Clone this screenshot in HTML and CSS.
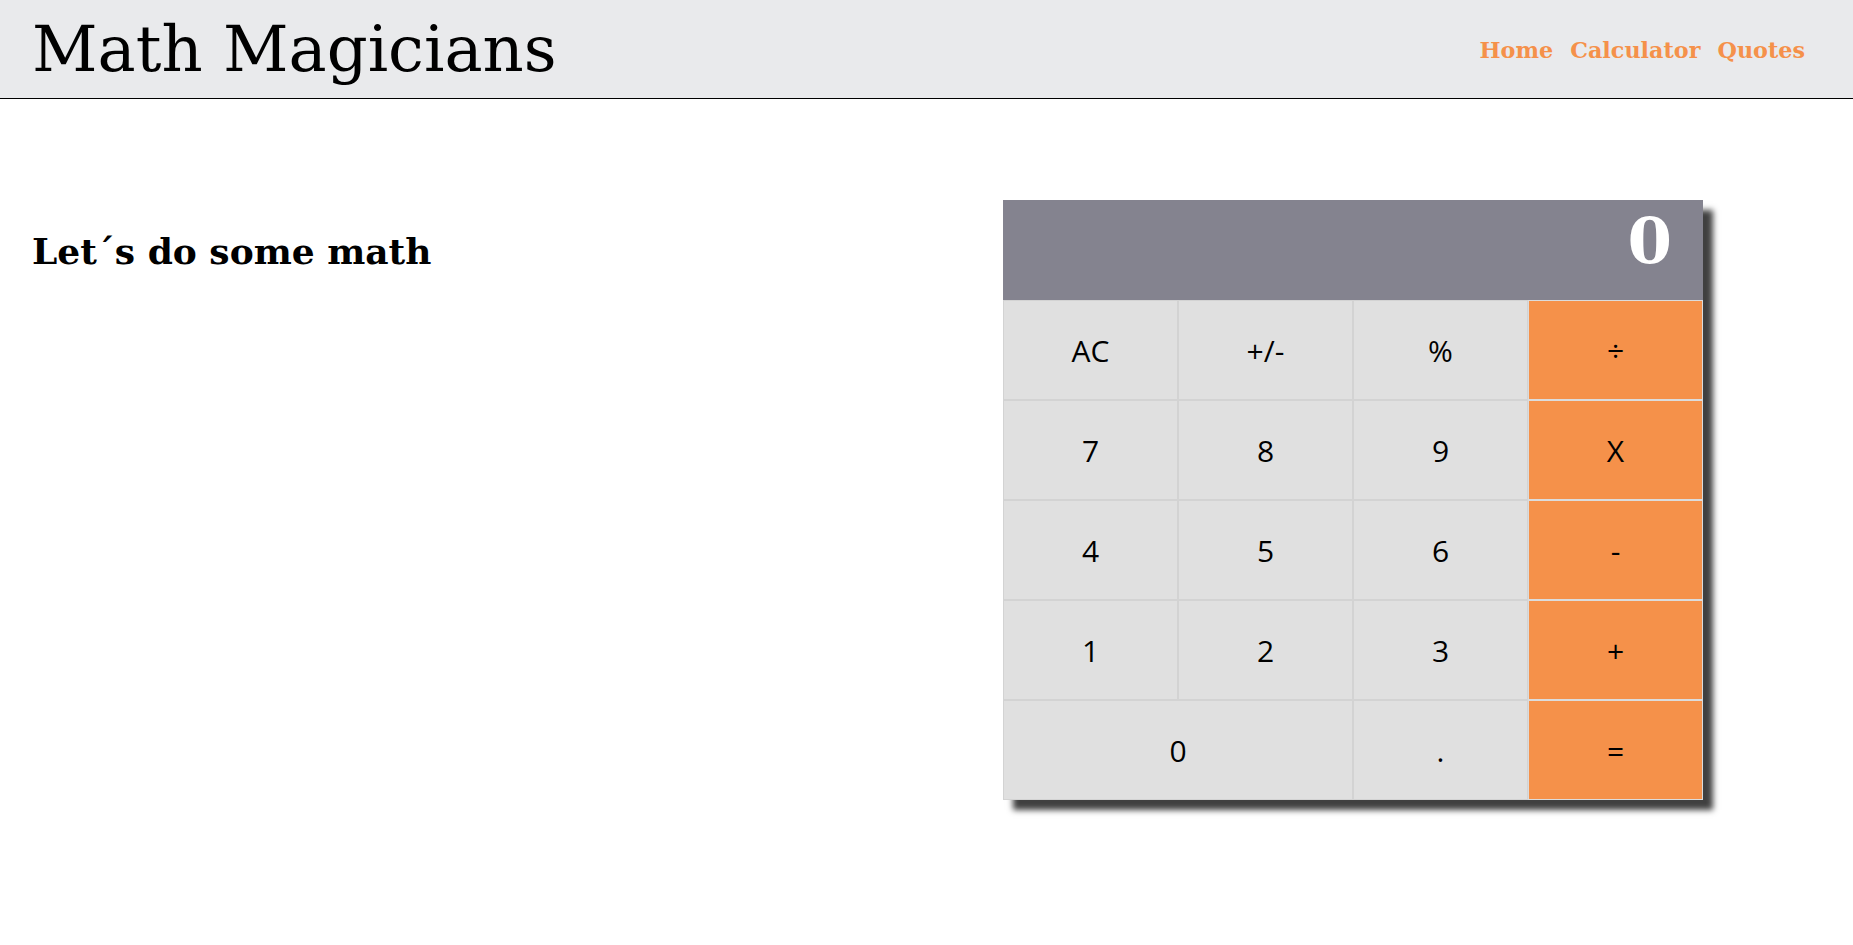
FILE: index.html
```html
<!DOCTYPE html>
<html lang="en">
<head>
<meta charset="utf-8">
<title>Math Magicians</title>
<link rel="stylesheet" href="styles.css">
</head>
<body>
<header class="site-header">
  <h1 class="logo">Math Magicians</h1>
  <nav class="nav">
    <a href="#" class="nav-link">Home</a>
    <a href="#" class="nav-link">Calculator</a>
    <a href="#" class="nav-link">Quotes</a>
  </nav>
</header>
<main class="page">
  <h2 class="intro">Let´s do some math</h2>
  <div class="calculator">
    <div class="display">0</div>
    <div class="keys">
      <button class="key">AC</button>
      <button class="key">+/-</button>
      <button class="key">%</button>
      <button class="key op">÷</button>
      <button class="key">7</button>
      <button class="key">8</button>
      <button class="key">9</button>
      <button class="key op">X</button>
      <button class="key">4</button>
      <button class="key">5</button>
      <button class="key">6</button>
      <button class="key op">-</button>
      <button class="key">1</button>
      <button class="key">2</button>
      <button class="key">3</button>
      <button class="key op">+</button>
      <button class="key wide">0</button>
      <button class="key">.</button>
      <button class="key op">=</button>
    </div>
  </div>
</main>
</body>
</html>
```

FILE: styles.css
```css
* {
  box-sizing: border-box;
}

body {
  margin: 0;
  font-family: "DejaVu Serif", serif;
  background: #fff;
  color: #000;
}

.site-header {
  height: 99px;
  background: #e9eaec;
  border-bottom: 1px solid #000;
  display: flex;
  align-items: center;
  justify-content: space-between;
  padding: 0 48px 0 32px;
}

.logo {
  margin: 0;
  font-size: 64px;
  font-weight: normal;
  line-height: normal;
}

.nav {
  display: flex;
  gap: 17px;
  padding-top: 2px;
}

.nav-link {
  color: #f5914a;
  font-weight: bold;
  font-size: 22.3px;
  text-decoration: none;
}

.page {
  display: flex;
  justify-content: space-between;
  align-items: flex-start;
  padding: 101px 150px 60px 32px;
}

.intro {
  margin: 30px 0 0;
  font-size: 36px;
  font-weight: bold;
  line-height: normal;
}

.calculator {
  width: 700px;
  box-shadow: 10px 10px 6px #404040;
}

.display {
  height: 100px;
  background: #84838f;
  color: #fff;
  font-family: "DejaVu Serif", serif;
  font-weight: bold;
  font-size: 64px;
  text-align: right;
  padding: 0 31px;
  line-height: 82px;
}

.keys {
  display: grid;
  grid-template-columns: repeat(4, 175px);
  grid-auto-rows: 100px;
}

.key {
  margin: 0;
  border: 1px solid #d3d3d3;
  background: #e0e0e0;
  color: #000;
  font-family: "Open Sans", sans-serif;
  font-size: 30px;
  padding: 0;
  cursor: pointer;
}

.key.op {
  background: #f5914a;
  border-color: #dcdcdc;
}

.key.wide {
  grid-column: span 2;
}
```
